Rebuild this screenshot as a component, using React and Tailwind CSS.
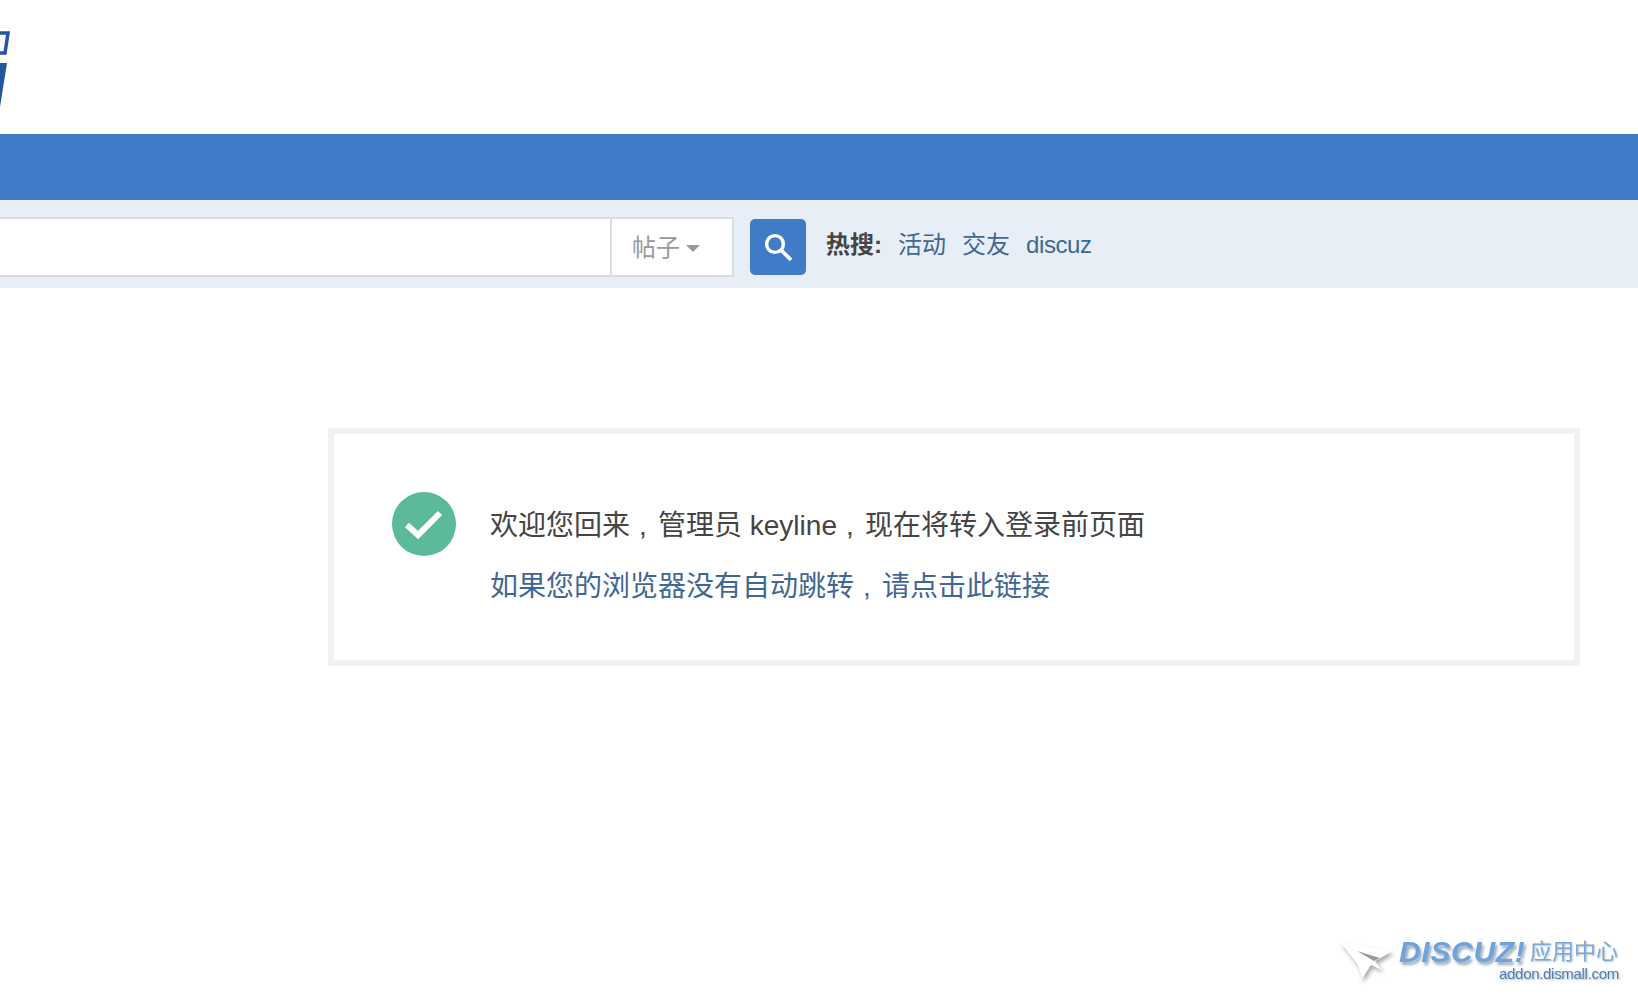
const stack = "font-['Liberation_Sans','Noto_Sans_CJK_SC',sans-serif]";

function LogoCrop() {
  // only the right edge of the logo is visible, the rest is off the page
  return (
    <svg width="12" height="112" viewBox="0 0 12 112" aria-hidden="true">
      <path d="M-6 5H8L5 25H-6" fill="none" stroke="#2456a0" strokeWidth="3.5" />
      <path d="M-8 35H7L0 79H-8Z" fill="#2456a0" />
    </svg>
  );
}

function SearchIcon() {
  return (
    <svg width="32" height="32" viewBox="0 0 32 32" fill="none" stroke="#fff" aria-hidden="true">
      <circle cx="13" cy="13" r="8.4" strokeWidth="3.4" />
      <path d="M19 19L29 29" strokeWidth="3.8" />
    </svg>
  );
}

function Comma() {
  return <span className="inline-block w-[28px] pl-[9px]">,</span>;
}

function Watermark() {
  return (
    <div className="fixed right-0 bottom-0 w-[308px] h-[80px] pointer-events-none">
      <svg width="70" height="66" viewBox="0 0 70 66" className="absolute left-[-2px] top-0 drop-shadow-[2px_3px_2px_#a8a8a8]" aria-hidden="true">
        <path d="M12 22L64 31L51 39L47 41L54 50L43 45L34 59L30 45Z" fill="#fff" />
        <path d="M29 31L52 38L46 41Z" fill="#9a9a9a" />
      </svg>
      <span className="absolute left-[69px] top-[17px] text-[30px] leading-[30px] font-bold italic tracking-[0.7px] text-[#6ea3dc] [text-shadow:2px_3px_3px_#9aa9ba]">
        DISCUZ!
      </span>
      <span className="absolute left-[200px] top-[20px] text-[22px] leading-[24px] text-[#7ba8da] [text-shadow:1px_1px_2px_#b4bfcb]">
        应用中心
      </span>
      <span className="absolute left-[169px] top-[45px] text-[15px] leading-[18px] tracking-[-0.3px] text-[#4f7fb3] [text-shadow:1px_1px_2px_#a9b4c0]">
        addon.dismall.com
      </span>
    </div>
  );
}

export default function App() {
  return (
    <div className={`min-h-[1000px] bg-white overflow-hidden ${stack}`}>
      <div className="h-[134px] pt-[28px]">
        <LogoCrop />
      </div>
      <div className="h-[66px] bg-[#407bc8]" />

      {/* search bar */}
      <div className="h-[88px] bg-[#e8eef6] flex items-start pt-[17px]">
        <div className="w-[734px] h-[60px] flex bg-white border-2 border-l-0 border-[#d9dee4]">
          <div className="flex-1" />
          <div className="w-[122px] border-l-2 border-[#d9dee4] flex items-center pl-[20px] pt-[2px] text-[24px] leading-none text-[#999]">
            帖子
            <span className="ml-[6px] w-0 h-0 border-x-[7px] border-x-transparent border-t-[7px] border-t-[#999]" />
          </div>
        </div>
        <button className="ml-[16px] mt-[2px] w-[56px] h-[56px] rounded-[5px] bg-[#407bc8] flex items-center justify-center">
          <SearchIcon />
        </button>
        <div className="ml-[20px] h-[54px] pt-[2px] flex items-center text-[24px]">
          <span className="font-bold text-[#444]">热搜:</span>
          <a className="ml-[16px] text-[#3f6794]">活动</a>
          <a className="ml-[16px] text-[#3f6794]">交友</a>
          <a className="ml-[16px] tracking-[-0.4px] text-[#3f6794]">discuz</a>
        </div>
      </div>

      {/* login message */}
      <div className="mt-[140px] ml-[328px] w-[1252px] h-[238px] border-[6px] border-[#f2f2f2] flex pl-[58px] pt-[58px]">
        <div className="w-[64px] h-[64px] rounded-full bg-[#5bb99c] flex items-center justify-center">
          <svg width="40" height="32" viewBox="0 0 40 32" fill="none" aria-hidden="true">
            <path d="M3 17L14 27L36 5" stroke="#fff" strokeWidth="6" />
          </svg>
        </div>
        <div className="ml-[34px] text-[28px]">
          <p className="h-[63px] pt-[3px] leading-[62px] text-[#444]">
            欢迎您回来<Comma />管理员 keyline<Comma />现在将转入登录前页面
          </p>
          <a className="block pt-[2px] leading-[60px] text-[#3f6794]">
            如果您的浏览器没有自动跳转<Comma />请点击此链接
          </a>
        </div>
      </div>

      <Watermark />
    </div>
  );
}
